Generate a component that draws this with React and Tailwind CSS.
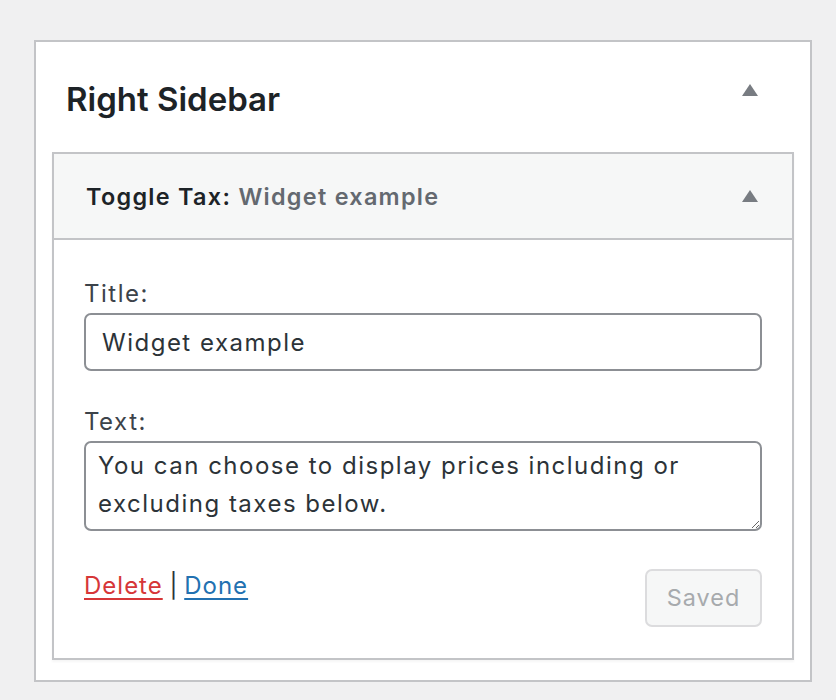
import React from 'react';

const FONT = { fontFamily: 'Inter, "Liberation Sans", sans-serif' };

function Caret() {
  return (
    <svg width="16" height="12" viewBox="0 0 16 12" className="block">
      <polygon points="8,0 16,12 0,12" fill="#787c82" />
    </svg>
  );
}

export default function App() {
  return (
    <div className="min-h-screen bg-[#f0f0f1] pt-10 pl-[34px]" style={FONT}>
      <div className="w-[778px] h-[642px] border-2 border-[#c3c4c7] bg-white px-4 pt-[37px]">
        {/* sidebar heading */}
        <div className="flex items-start justify-between pl-[14px] pr-[36px] mb-[33px]">
          <h2 className="text-[33px] leading-[40px] font-semibold text-[#1d2327]">Right Sidebar</h2>
          <div className="mt-[5px]"><Caret /></div>
        </div>

        {/* widget */}
        <div className="border-2 border-[#c3c4c7] bg-white shadow-[0_2px_2px_rgba(0,0,0,0.04)]">
          <div className="h-[84px] bg-[#f6f7f7] border-b-2 border-[#c3c4c7] box-content flex items-center justify-between pl-8 pr-[34px]">
            <h3 className="text-[23.4px] leading-[33px] font-semibold tracking-[1.3px] text-[#1d2327]">
              Toggle Tax:<span className="text-[#646970]"> Widget example</span>
            </h3>
            <Caret />
          </div>

          <div className="px-[30px] pt-[37px] pb-[31px] text-[24px] tracking-[1.5px]">
            <label className="block leading-[33px] text-[#3c434a]">Title:</label>
            <input
              defaultValue="Widget example"
              className="mt-[3px] block w-full h-[58px] rounded-[7px] border-2 border-[#8c8f94] px-4 text-[24px] tracking-[1.5px] text-[#2c3338] bg-white outline-none"
              style={FONT}
            />

            <label className="block mt-[34px] leading-[33px] text-[#3c434a]">Text:</label>
            <textarea
              defaultValue="You can choose to display prices including or excluding taxes below."
              className="mt-[3px] block w-full h-[90px] rounded-[7px] border-2 border-[#8c8f94] px-[12px] py-[4px] text-[24px] leading-[38px] tracking-[1.5px] text-[#2c3338] bg-white outline-none"
              style={FONT}
            />

            <div className="mt-[38px] flex items-start justify-between">
              <div className="leading-[33px] text-[#2c3338] tracking-normal">
                <a className="text-[#d63638] tracking-[1px] underline decoration-2 underline-offset-[4px]" href="#">Delete</a>
                <span> | </span>
                <a className="text-[#2271b1] tracking-[1px] underline decoration-2 underline-offset-[4px]" href="#">Done</a>
              </div>
              <button className="w-[117px] h-[58px] rounded-[7px] border-2 border-[#dcdcde] bg-[#f6f7f7] text-[23.4px] tracking-[1px] text-[#a7aaad]">
                Saved
              </button>
            </div>
          </div>
        </div>
      </div>
    </div>
  );
}
